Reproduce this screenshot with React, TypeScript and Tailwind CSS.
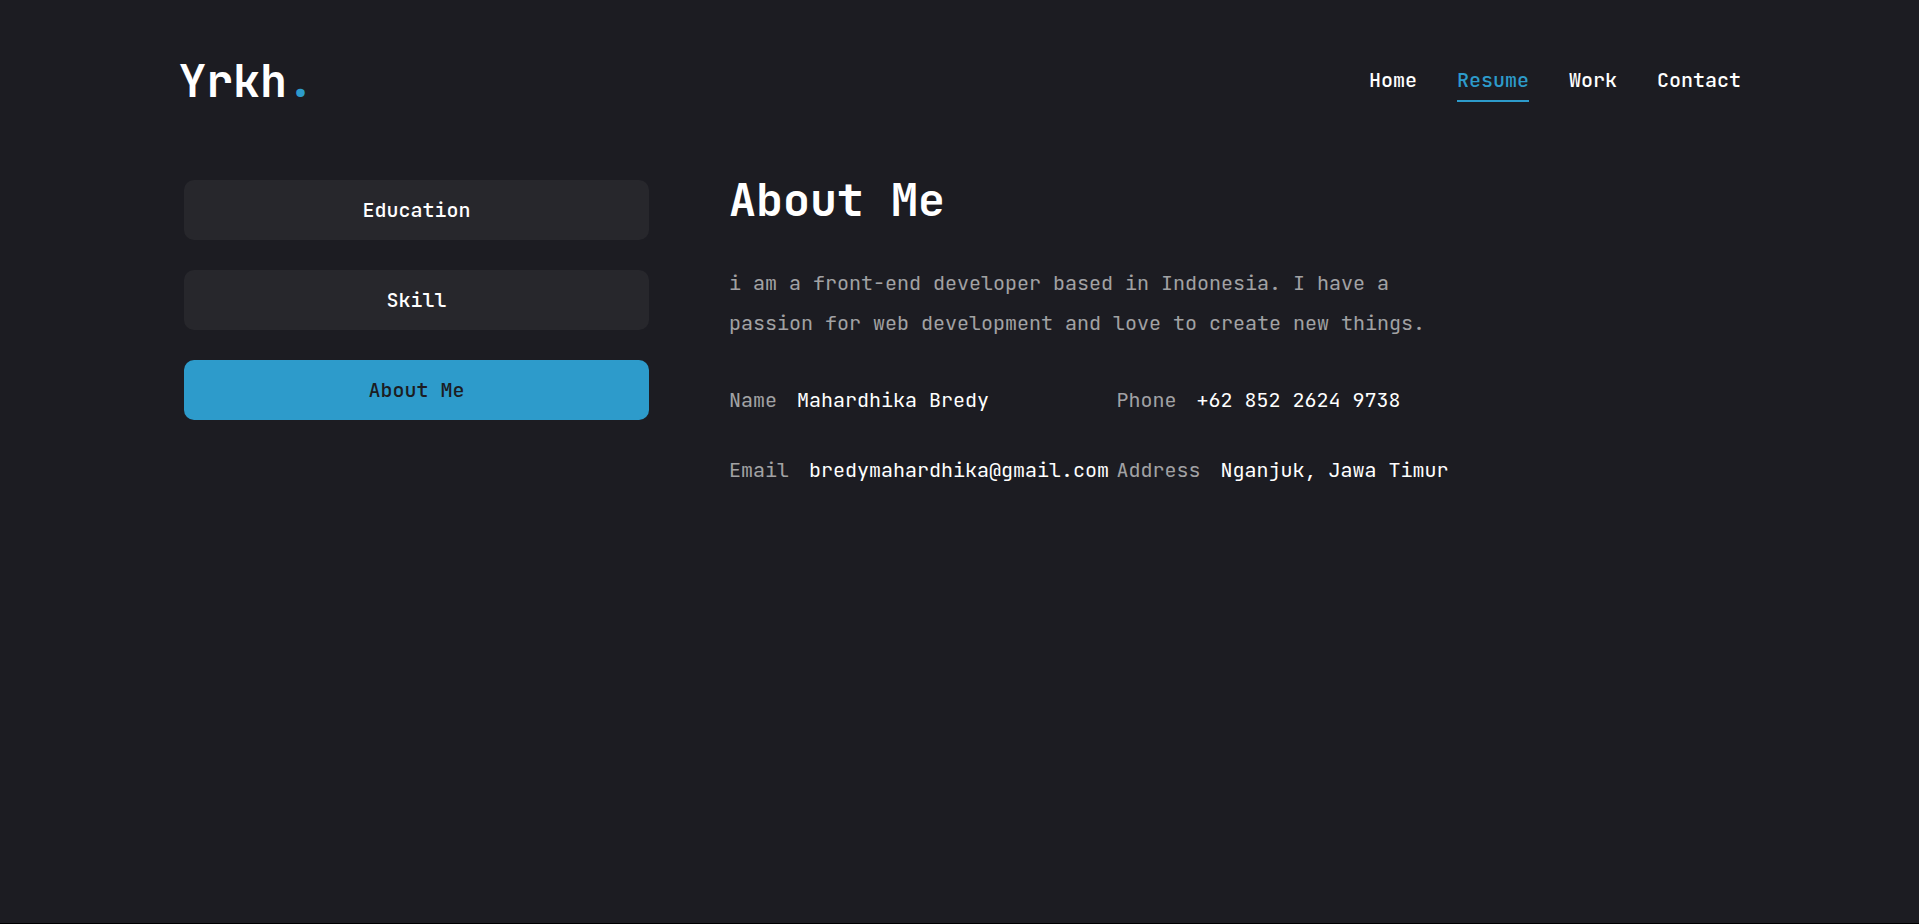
const navLinks = [
  { name: 'Home', active: false },
  { name: 'Resume', active: true },
  { name: 'Work', active: false },
  { name: 'Contact', active: false },
];

const tabs = [
  { name: 'Education', active: false },
  { name: 'Skill', active: false },
  { name: 'About Me', active: true },
];

const info = [
  { label: 'Name', value: 'Mahardhika Bredy' },
  { label: 'Phone', value: '+62 852 2624 9738' },
  { label: 'Email', value: 'bredymahardhika@gmail.com' },
  { label: 'Address', value: 'Nganjuk, Jawa Timur' },
];

function Header() {
  return (
    <header className="flex h-[160px] items-center justify-between">
      <a href="#home" className="pt-0.5 text-[45px] leading-[50px] font-semibold">
        Yrkh<span className="text-[#2d9bcb]">.</span>
      </a>
      <nav className="flex gap-10">
        {navLinks.map((link) => (
          <a
            key={link.name}
            href={`#${link.name.toLowerCase()}`}
            aria-current={link.active ? 'page' : undefined}
            className={
              link.active
                ? 'border-y-2 border-t-transparent border-b-[#2d9bcb] py-1 leading-8 font-medium text-[#2d9bcb]'
                : 'border-y-2 border-transparent py-1 leading-8 font-medium'
            }
          >
            {link.name}
          </a>
        ))}
      </nav>
    </header>
  );
}

export default function App() {
  return (
    <div className="min-h-screen border-b border-black bg-[#1c1c22] font-['JetBrains_Mono','DejaVu_Sans_Mono',monospace] text-[20px] leading-[30px] text-white">
      <div className="mx-auto max-w-[1601px] pr-[19px] pl-5">
        <Header />
        <main className="flex flex-col gap-[75px] pt-[15px] lg:flex-row">
          <div role="tablist" aria-orientation="vertical" className="flex w-full flex-col gap-[30px] p-[5px] lg:w-[475px] lg:shrink-0">
            {tabs.map((tab) => (
              <button
                key={tab.name}
                type="button"
                role="tab"
                aria-selected={tab.active}
                className={
                  tab.active
                    ? 'h-[60px] rounded-[10px] bg-[#2d9bcb] font-medium text-[#1c1c22]'
                    : 'h-[60px] rounded-[10px] bg-[#27272c] font-medium text-white'
                }
              >
                {tab.name}
              </button>
            ))}
          </div>
          <section role="tabpanel" className="min-w-0 flex-1">
            <h1 className="text-[45px] leading-[50px] font-bold">About Me</h1>
            <p className="mt-[38px] max-w-[750px] leading-10 text-white/60">
              i am a front-end developer based in Indonesia. I have a passion for web development and love to create new
              things.
            </p>
            <dl className="mt-[42px] grid max-w-[775px] gap-y-10 md:grid-cols-2">
              {info.map((item) => (
                <div key={item.label} className="flex items-center gap-5 whitespace-nowrap">
                  <dt className="text-white/60">{item.label}</dt>
                  <dd>{item.value}</dd>
                </div>
              ))}
            </dl>
          </section>
        </main>
      </div>
    </div>
  );
}
